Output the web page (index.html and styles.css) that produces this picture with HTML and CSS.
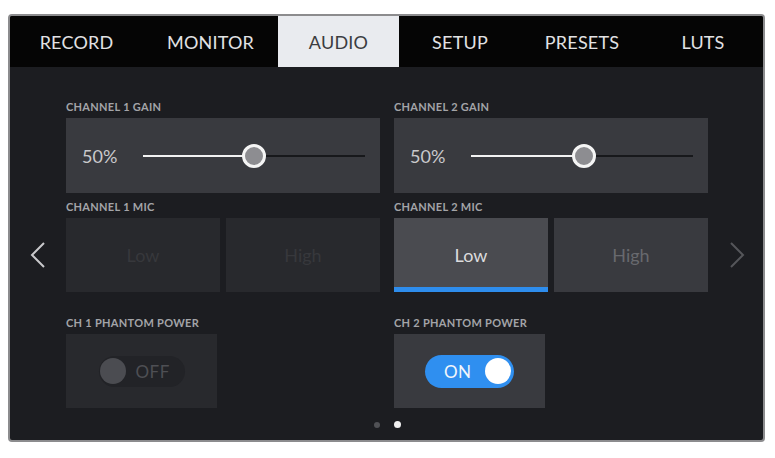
FILE: index.html
```html
<!DOCTYPE html>
<html>
<head>
    <link rel="stylesheet" href="styles.css">
</head>
<body>
    <div class="screen">
        <div class="tabs">
            <div class="tab tab-record">RECORD</div>
            <div class="tab tab-monitor">MONITOR</div>
            <div class="tab tab-audio active">AUDIO</div>
            <div class="tab tab-setup">SETUP</div>
            <div class="tab tab-presets">PRESETS</div>
            <div class="tab tab-luts">LUTS</div>
        </div>

        <div class="content">
            <div class="label col-1">CHANNEL 1 GAIN</div>
            <div class="label col-2">CHANNEL 2 GAIN</div>

            <div class="box gain col-1">
                <span class="value">50%</span>
                <div class="slider">
                    <div class="fill" style="width: 50%"></div>
                    <div class="thumb" style="left: 50%"></div>
                </div>
            </div>
            <div class="box gain col-2">
                <span class="value">50%</span>
                <div class="slider">
                    <div class="fill" style="width: 51%"></div>
                    <div class="thumb" style="left: 51%"></div>
                </div>
            </div>

            <div class="label mic-label col-1">CHANNEL 1 MIC</div>
            <div class="label mic-label col-2">CHANNEL 2 MIC</div>

            <div class="arrow arrow-left">
                <svg width="16" height="26" viewBox="0 0 16 26"><path d="M14 1 L2 13 L14 25" fill="none" stroke="#c9c9cc" stroke-width="2"/></svg>
            </div>
            <div class="choices col-1 disabled">
                <div class="choice">Low</div>
                <div class="choice">High</div>
            </div>
            <div class="choices col-2">
                <div class="choice selected">Low</div>
                <div class="choice">High</div>
            </div>
            <div class="arrow arrow-right">
                <svg width="16" height="26" viewBox="0 0 16 26"><path d="M2 1 L14 13 L2 25" fill="none" stroke="#55565a" stroke-width="2"/></svg>
            </div>

            <div class="label phantom-label col-1">CH 1 PHANTOM POWER</div>
            <div class="label phantom-label col-2">CH 2 PHANTOM POWER</div>

            <div class="box phantom col-1 disabled">
                <div class="toggle off">
                    <span class="knob"></span>
                    <span class="state">OFF</span>
                </div>
            </div>
            <div class="box phantom col-2">
                <div class="toggle on">
                    <span class="state">ON</span>
                    <span class="knob"></span>
                </div>
            </div>
        </div>

        <div class="dots">
            <span class="dot"></span>
            <span class="dot current"></span>
        </div>
    </div>
</body>
</html>
```

FILE: styles.css
```css
body {
    margin: 0;
    background-color: white;
    font-family: Lato, "Open Sans", sans-serif;
}
.screen {
    margin: 14px 0 0 8px;
    width: 753px;
    height: 424px;
    border: 2px solid #8c8c8e;
    border-radius: 4px;
    background-color: #1c1d21;
    overflow: hidden;
}
.tabs {
    display: flex;
    height: 51px;
    background-color: #050505;
}
.tab {
    display: flex;
    align-items: center;
    justify-content: center;
    font-size: 18px;
    letter-spacing: 0.2px;
    color: #e2e2e4;
}
.tab-record { width: 133px; }
.tab-monitor { width: 135px; }
.tab-audio { width: 121px; }
.tab-setup { width: 122px; }
.tab-presets { width: 122px; }
.tab-luts { width: 120px; }
.tab.active {
    background-color: #e9ebef;
    color: #3b3c40;
}

.content {
    display: grid;
    grid-template-columns: 42px 314px 314px 1fr;
    column-gap: 14px;
    padding-top: 33px;
}
.col-1 { grid-column: 2; }
.col-2 { grid-column: 3; }

.label {
    font-size: 11px;
    line-height: 14px;
    font-weight: bold;
    letter-spacing: 0.3px;
    color: #a3a4a8;
    margin-bottom: 4px;
}
.mic-label { margin-top: 7px; }
.phantom-label { margin-top: 24px; }

.box {
    background-color: #393a3f;
}
.box.disabled {
    background-color: #28292d;
}

.gain {
    height: 75px;
    display: flex;
    align-items: center;
    padding: 0 15px 0 16px;
}
.value {
    width: 61px;
    font-size: 18px;
    color: #c9c9cc;
}
.slider {
    flex: 1;
    position: relative;
    height: 2px;
    background-color: #17181b;
}
.fill {
    height: 2px;
    background-color: #f2f2f2;
}
.thumb {
    position: absolute;
    top: -11px;
    margin-left: -12px;
    width: 18px;
    height: 18px;
    border: 3px solid #f5f5f5;
    border-radius: 50%;
    background-color: #8d8d91;
}

.choices {
    display: grid;
    grid-template-columns: 1fr 1fr;
    column-gap: 6px;
    height: 74px;
}
.choice {
    display: flex;
    align-items: center;
    justify-content: center;
    font-size: 18px;
    background-color: #393a3f;
    color: #68696e;
}
.choice.selected {
    background-color: #4a4b50;
    color: #dcdcde;
    box-shadow: inset 0 -5px 0 #2e8ded;
}
.choices.disabled .choice {
    background-color: #28292d;
    color: #37383c;
}

.arrow {
    display: flex;
    align-items: center;
}
.arrow-left {
    grid-column: 1;
    grid-row: 4;
    padding-left: 20px;
}
.arrow-right {
    grid-column: 4;
    grid-row: 4;
    padding-left: 7px;
}

.phantom {
    width: 151px;
    height: 74px;
    display: flex;
    align-items: center;
    justify-content: center;
}
.toggle {
    display: flex;
    align-items: center;
    border-radius: 17px;
}
.toggle.off {
    width: 86px;
    height: 31px;
    background-color: #222327;
}
.toggle.on {
    width: 89px;
    height: 33px;
    background-color: #2f8ff0;
    justify-content: space-between;
}
.knob {
    width: 26px;
    height: 26px;
    border-radius: 50%;
}
.off .knob {
    margin-left: 1px;
    background-color: #4b4c51;
}
.on .knob {
    margin-right: 3px;
    background-color: #ffffff;
}
.state {
    font-size: 17px;
    letter-spacing: 0.5px;
}
.off .state {
    margin-left: 10px;
    color: #4e4f54;
}
.on .state {
    margin-left: 19px;
    color: #f2f6fb;
}

.dots {
    display: flex;
    justify-content: center;
    align-items: center;
    gap: 14px;
    margin-top: 13px;
    padding-left: 1px;
}
.dot {
    width: 6px;
    height: 6px;
    border-radius: 50%;
    background-color: #505155;
}
.dot.current {
    width: 7px;
    height: 7px;
    background-color: #f0f0f0;
}
```
